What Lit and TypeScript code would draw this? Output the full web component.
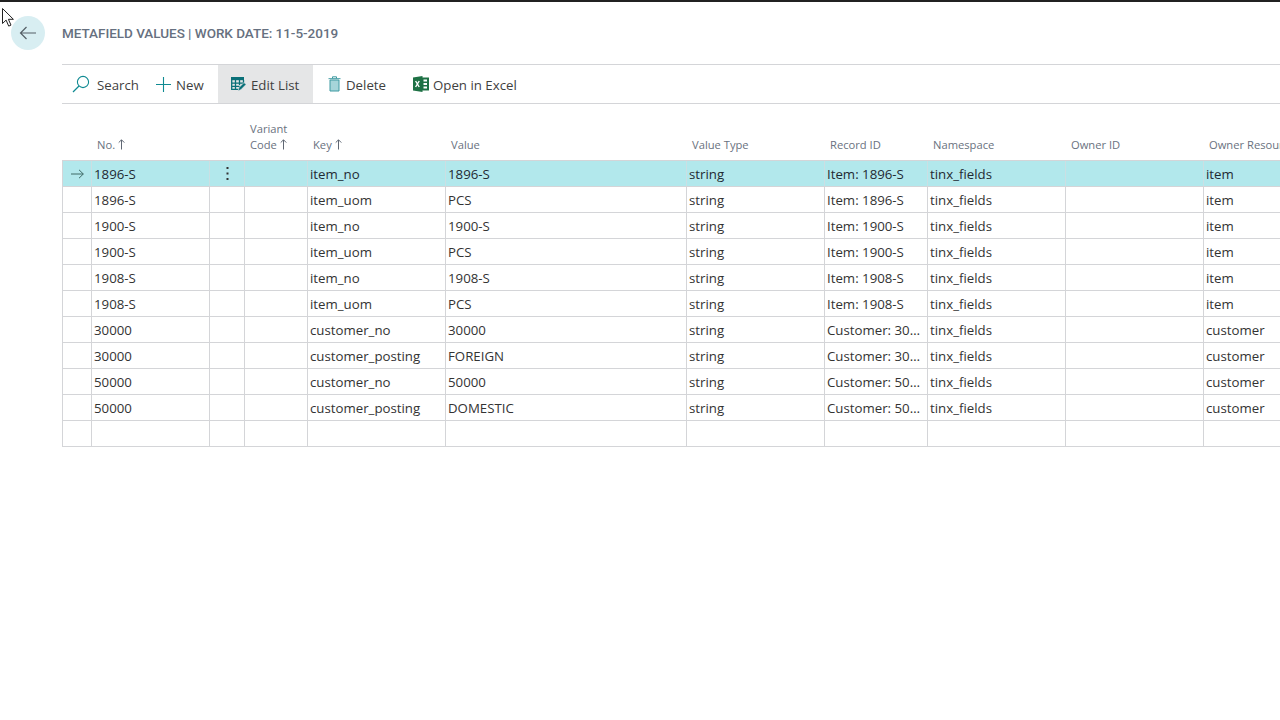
import { LitElement, html, css, svg } from "lit";
import { customElement } from "lit/decorators.js";

const ROWS: string[][] = [
  ["1896-S", "item_no", "1896-S", "string", "Item: 1896-S", "tinx_fields", "item"],
  ["1896-S", "item_uom", "PCS", "string", "Item: 1896-S", "tinx_fields", "item"],
  ["1900-S", "item_no", "1900-S", "string", "Item: 1900-S", "tinx_fields", "item"],
  ["1900-S", "item_uom", "PCS", "string", "Item: 1900-S", "tinx_fields", "item"],
  ["1908-S", "item_no", "1908-S", "string", "Item: 1908-S", "tinx_fields", "item"],
  ["1908-S", "item_uom", "PCS", "string", "Item: 1908-S", "tinx_fields", "item"],
  ["30000", "customer_no", "30000", "string", "Customer: 30000", "tinx_fields", "customer"],
  ["30000", "customer_posting", "FOREIGN", "string", "Customer: 30000", "tinx_fields", "customer"],
  ["50000", "customer_no", "50000", "string", "Customer: 50000", "tinx_fields", "customer"],
  ["50000", "customer_posting", "DOMESTIC", "string", "Customer: 50000", "tinx_fields", "customer"],
  ["", "", "", "", "", "", ""],
];

const upArrow = html`<svg class="sort" width="7" height="11" viewBox="0 0 7 11"><path d="M3.5 10.5V1M.7 3.6 3.5.8l2.8 2.8" fill="none" stroke="#5f6773" stroke-width="1"/></svg>`;

@customElement("app-root")
export class AppRoot extends LitElement {
  static styles = css`
    :host { display: block; width: 1280px; height: 720px; overflow: hidden; background: #fff; position: relative;
      font-family: "Open Sans", "Noto Sans", sans-serif; font-size: 13px; color: #333; }
    .topbar { height: 2px; background: #212121; }
    .page { display: grid; grid-template-columns: 62px 1fr; }
    .backcol { display: flex; justify-content: center; padding-top: 14px; }
    .back { width: 34px; height: 34px; margin-left: -6px; border-radius: 50%; background: #d8eef2; display: flex; align-items: center; justify-content: center; }
    .main { min-width: 0; }
    .title { height: 62px; display: flex; align-items: center; box-sizing: border-box;
      font-family: "Roboto", sans-serif; font-size: 13.5px; font-weight: 500; color: #667080; letter-spacing: -0.03px; }
    .bar { height: 38px; border-top: 1px solid #d4d5d8; border-bottom: 1px solid #d4d5d8; display: flex; align-items: stretch; }
    .cmd { display: flex; align-items: center; gap: 6px; font-size: 13.25px; color: #3f3f3f; white-space: nowrap; }
    .cmd span { margin-top: 2px; }
    .cmd.search { padding-left: 10px; width: 94px; gap: 7px; box-sizing: border-box; }
    .cmd.new { width: 62px; gap: 5px; box-sizing: border-box; }
    .cmd.edit { width: 95px; background: #e5e6e7; padding-left: 13px; box-sizing: border-box; gap: 5px; }
    .cmd.del { width: 100px; padding-left: 15px; box-sizing: border-box; gap: 5px; }
    .cmd.xl { gap: 4px; }
    .table { width: 1218px; margin-left: 62px; display: grid; grid-template-columns: 1fr; }
    .row { display: grid; grid-template-columns: 29px 118px 35px 63px 138px 241px 138px 103px 138px 138px 138px; }
    .head { height: 57px; }
    .hc { display: flex; align-items: flex-end; padding: 0 0 8px 6px; font-size: 11.2px; line-height: 16px; color: #6a7280; white-space: nowrap; overflow: hidden; box-sizing: border-box; }
    .hc .wrap { display: block; }
    .sort { margin-left: 3px; vertical-align: -1px; }
    .rows { border-top: 1px solid #d4d5d8; border-left: 1px solid #d4d5d8; margin-top: -1px; }
    .rows .row { height: 26px; box-sizing: border-box; border-bottom: 1px solid #d4d5d8; }
    .rows .row.sel { background: #b2e8ec; }
    .c { border-right: 1px solid #d4d5d8; padding: 1px 2px 0; font-size: 13.25px; line-height: 25px; color: #333; white-space: nowrap; overflow: hidden; text-overflow: ellipsis; box-sizing: border-box; min-width: 0; display: block; }
    .sel .c { color: #1f2a33; border-right-color: #cbdfe3; }
    .c.icon { display: flex; align-items: center; justify-content: center; padding: 0; }
    .c.last { border-right: none; }
    .cursor { position: absolute; left: 2px; top: 8px; }
  `;

  render() {
    return html`
      <div class="topbar"></div>
      <div class="page">
        <div class="backcol">
          <div class="back">
            <svg width="18" height="14" viewBox="0 0 18 14"><path d="M17 7H1.5M7.5 1 1.5 7l6 6" fill="none" stroke="#555f66" stroke-width="1.2"/></svg>
          </div>
        </div>
        <div class="main">
          <div class="title">METAFIELD VALUES | WORK DATE: 11-5-2019</div>
          <div class="bar">
            <div class="cmd search">
              <svg width="18" height="18" viewBox="0 0 18 18"><circle cx="11" cy="7" r="5.6" fill="none" stroke="#0f8a92" stroke-width="1.1"/><path d="M7 11 1 17" stroke="#0f8a92" stroke-width="1.3"/></svg>
              <span>Search</span>
            </div>
            <div class="cmd new">
              <svg width="15" height="15" viewBox="0 0 15 15"><path d="M7.5 0v15M0 7.5h15" stroke="#0f8a92" stroke-width="1.1"/></svg>
              <span>New</span>
            </div>
            <div class="cmd edit">
              <svg width="15" height="14" viewBox="0 0 15 14"><path d="M0 0h13v3.2H0z" fill="#0a7078"/><path d="M.7 3v9.3h7M4.5 3v9.3M8.5 3v5M12.5 3v2.5M.7 6.2h12M.7 9.3h8" fill="none" stroke="#0a7078" stroke-width="1.3"/><path d="M7 14l1-3.4 5-5 2 2-5 5z" fill="#0a7078" stroke="#e5e6e7" stroke-width=".6"/></svg>
              <span>Edit List</span>
            </div>
            <div class="cmd del">
              <svg width="13" height="16" viewBox="0 0 13 16"><path d="M2 4h9v11H2z" fill="#a5d5d9" stroke="#3f9aa2" stroke-width="1"/><path d="M.5 2.7h12M4.5 2.5V.8h4v1.7" fill="none" stroke="#3f9aa2" stroke-width="1"/></svg>
              <span>Delete</span>
            </div>
            <div class="cmd xl">
              <svg width="16" height="16" viewBox="0 0 16 16"><path d="M6 1.5h10v13H6z" fill="#1e7145"/><path d="M10.5 3.5h3.5v2h-3.5zM10.5 7h3.5v2h-3.5zM10.5 10.5h3.5v2h-3.5z" fill="#fff"/><path d="M0 1.5 9.5 0v16L0 14.5z" fill="#1e7145"/><path d="m2.6 5 3.6 6M6.2 5l-3.6 6" stroke="#fff" stroke-width="1.4"/></svg>
              <span>Open in Excel</span>
            </div>
          </div>
        </div>
      </div>
      <div class="table">
        <div class="row head">
          <div class="hc"></div>
          <div class="hc"><span>No.${upArrow}</span></div>
          <div class="hc"></div>
          <div class="hc"><span class="wrap">Variant<br />Code${upArrow}</span></div>
          <div class="hc"><span>Key${upArrow}</span></div>
          <div class="hc"><span>Value</span></div>
          <div class="hc"><span>Value Type</span></div>
          <div class="hc"><span>Record ID</span></div>
          <div class="hc"><span>Namespace</span></div>
          <div class="hc"><span>Owner ID</span></div>
          <div class="hc"><span>Owner Resource</span></div>
        </div>
        <div class="rows">
          ${ROWS.map((r, i) => html`
            <div class="row ${i === 0 ? "sel" : ""}">
              <div class="c icon">${i === 0 ? html`<svg width="13" height="10" viewBox="0 0 13 10"><path d="M0 5h12.3M8 .8 12.3 5 8 9.2" fill="none" stroke="#3f6a66" stroke-width="1"/></svg>` : ""}</div>
              <div class="c">${r[0]}</div>
              <div class="c icon">${i === 0 ? html`<svg width="3" height="13" viewBox="0 0 3 13"><path d="M0.5 0h2v2h-2zM.5 5.5h2v2h-2zM.5 11h2v2h-2z" fill="#333"/></svg>` : ""}</div>
              <div class="c"></div>
              <div class="c">${r[1]}</div>
              <div class="c">${r[2]}</div>
              <div class="c">${r[3]}</div>
              <div class="c">${r[4]}</div>
              <div class="c">${r[5]}</div>
              <div class="c"></div>
              <div class="c last">${r[6]}</div>
            </div>`)}
        </div>
      </div>
      <svg class="cursor" width="13" height="20" viewBox="0 0 13 20">${svg`<path d="M.5.5v15l3.6-3.4 2.6 6 2.3-1-2.6-5.8h5z" fill="#fff" stroke="#222" stroke-width="1"/>`}</svg>
    `;
  }
}
